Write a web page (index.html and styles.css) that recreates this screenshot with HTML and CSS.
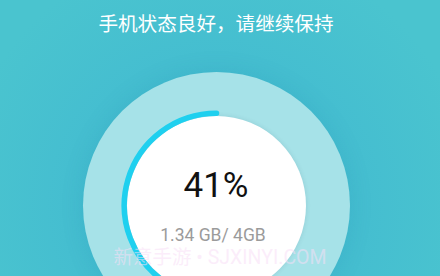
FILE: index.html
```html
<!DOCTYPE html>
<html lang="zh-CN">
<head>
<meta charset="utf-8">
<title>手机状态</title>
<link rel="stylesheet" href="styles.css">
</head>
<body>
<div class="screen">
  <h1 class="status">手机状态良好，请继续保持</h1>
  <div class="gauge">
    <svg class="gauge-arc" width="267" height="267" viewBox="0 0 267 267" aria-hidden="true">
      <path d="M133.5 41.25 A92.25 92.25 0 0 0 84.07 211.39" fill="none" stroke="#1fd0ef" stroke-width="5.5" stroke-linecap="round"/>
    </svg>
    <div class="gauge-face">
      <div class="percent">41%</div>
      <div class="usage">1.34 GB/ 4GB</div>
    </div>
  </div>
  <div class="watermark">新意手游 • SJXINYI.COM</div>
</div>
</body>
</html>
```

FILE: styles.css
```css
html, body {
  margin: 0;
  padding: 0;
}

body {
  width: 440px;
  height: 276px;
  overflow: hidden;
  background: #48c2cf;
}

.screen {
  position: relative;
  width: 440px;
  height: 276px;
  box-sizing: border-box;
  padding: 9px 8px 0 0;
  display: flex;
  flex-direction: column;
  align-items: center;
  background: radial-gradient(circle at 216px 206px, #41b9d2 0, #45bed0 150px, #4ac4cf 260px);
  overflow: hidden;
}

.status {
  margin: 0;
  font-family: "Noto Sans CJK SC", "Noto Sans", sans-serif;
  font-size: 19.6px;
  line-height: 28px;
  font-weight: 400;
  color: #ffffff;
  letter-spacing: 0;
}

.gauge {
  position: relative;
  flex: none;
  margin-top: 35px;
  width: 267px;
  height: 267px;
  border-radius: 50%;
  background: #a6e2e8;
  box-shadow: 0 0 24px rgba(20, 110, 150, 0.12);
  display: flex;
  align-items: center;
  justify-content: center;
}

.gauge-arc {
  position: absolute;
  left: 0;
  top: 0;
}

.gauge-face {
  width: 179px;
  height: 179px;
  border-radius: 50%;
  background: #ffffff;
  box-shadow: 0 0 5px rgba(0, 60, 80, 0.12);
  display: flex;
  flex-direction: column;
  align-items: center;
  justify-content: flex-start;
  padding-top: 50px;
  box-sizing: border-box;
}

.percent {
  font-family: Roboto, "Liberation Sans", sans-serif;
  font-size: 35px;
  line-height: 40px;
  font-weight: 400;
  color: #111111;
}

.usage {
  margin-top: 20px;
  margin-right: 6px;
  font-family: Roboto, "Liberation Sans", sans-serif;
  font-size: 17.5px;
  line-height: 18px;
  color: #9b9b9b;
}

.watermark {
  position: absolute;
  left: 0;
  right: 0;
  top: 248px;
  text-align: center;
  font-family: Roboto, "Noto Sans CJK SC", sans-serif;
  font-size: 19.5px;
  line-height: 20px;
  color: rgba(248, 222, 246, 0.55);
  white-space: nowrap;
}
```
